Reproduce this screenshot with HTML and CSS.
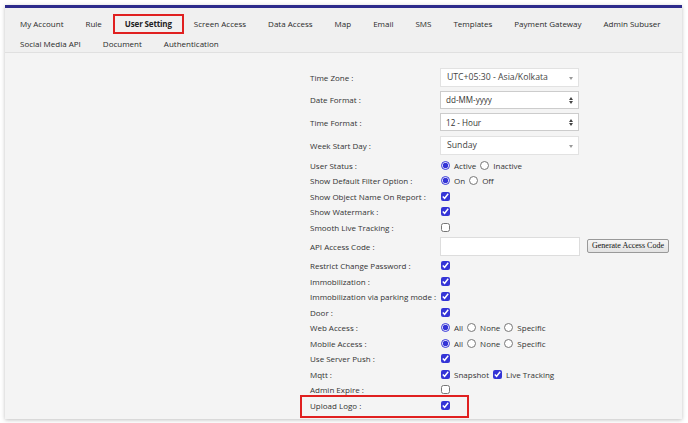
FILE: index.html
```html
<!DOCTYPE html>
<html>
<head>
<meta charset="utf-8">
<link rel="stylesheet" href="styles.css">
</head>
<body>
<div class="card">
  <nav class="tabs">
    <div class="tab-row">
      <span class="tab">My Account</span>
      <span class="tab">Rule</span>
      <span class="tab active">User Setting</span>
      <span class="tab">Screen Access</span>
      <span class="tab">Data Access</span>
      <span class="tab">Map</span>
      <span class="tab">Email</span>
      <span class="tab">SMS</span>
      <span class="tab">Templates</span>
      <span class="tab">Payment Gateway</span>
      <span class="tab">Admin Subuser</span>
    </div>
    <div class="tab-row">
      <span class="tab">Social Media API</span>
      <span class="tab">Document</span>
      <span class="tab">Authentication</span>
    </div>
  </nav>
  <div class="content">
    <div class="form">
      <div class="row sel-row"><label class="lbl">Time Zone :</label><div class="val"><div class="s2">UTC+05:30 - Asia/Kolkata<span class="caret"></span></div></div></div>
      <div class="row sel-row"><label class="lbl">Date Format :</label><div class="val"><div class="nsel">dd-MM-yyyy<span class="updown"><i class="up"></i><i class="dn"></i></span></div></div></div>
      <div class="row sel-row"><label class="lbl">Time Format :</label><div class="val"><div class="nsel">12 - Hour<span class="updown"><i class="up"></i><i class="dn"></i></span></div></div></div>
      <div class="row sel-row"><label class="lbl">Week Start Day :</label><div class="val"><div class="s2">Sunday<span class="caret"></span></div></div></div>
      <div class="row first-small"><label class="lbl">User Status :</label><div class="val"><input type="radio" name="us" checked><span class="opt">Active</span><input type="radio" name="us"><span class="opt">Inactive</span></div></div>
      <div class="row"><label class="lbl">Show Default Filter Option :</label><div class="val"><input type="radio" name="df" checked><span class="opt">On</span><input type="radio" name="df"><span class="opt">Off</span></div></div>
      <div class="row"><label class="lbl">Show Object Name On Report :</label><div class="val"><input type="checkbox" checked></div></div>
      <div class="row"><label class="lbl">Show Watermark :</label><div class="val"><input type="checkbox" checked></div></div>
      <div class="row"><label class="lbl">Smooth Live Tracking :</label><div class="val"><input type="checkbox"></div></div>
      <div class="row api-row"><label class="lbl">API Access Code :</label><div class="val"><div class="txt"></div><button class="gen">Generate Access Code</button></div></div>
      <div class="row"><label class="lbl">Restrict Change Password :</label><div class="val"><input type="checkbox" checked></div></div>
      <div class="row"><label class="lbl">Immobilization :</label><div class="val"><input type="checkbox" checked></div></div>
      <div class="row"><label class="lbl">Immobilization via parking mode :</label><div class="val"><input type="checkbox" checked></div></div>
      <div class="row"><label class="lbl">Door :</label><div class="val"><input type="checkbox" checked></div></div>
      <div class="row"><label class="lbl">Web Access :</label><div class="val"><input type="radio" name="wa" checked><span class="opt">All</span><input type="radio" name="wa"><span class="opt">None</span><input type="radio" name="wa"><span class="opt">Specific</span></div></div>
      <div class="row"><label class="lbl">Mobile Access :</label><div class="val"><input type="radio" name="ma" checked><span class="opt">All</span><input type="radio" name="ma"><span class="opt">None</span><input type="radio" name="ma"><span class="opt">Specific</span></div></div>
      <div class="row"><label class="lbl">Use Server Push :</label><div class="val"><input type="checkbox" checked></div></div>
      <div class="row"><label class="lbl">Mqtt :</label><div class="val"><input type="checkbox" checked><span class="opt">Snapshot</span><input type="checkbox" checked><span class="opt">Live Tracking</span></div></div>
      <div class="row"><label class="lbl">Admin Expire :</label><div class="val"><input type="checkbox"></div></div>
      <div class="row marked"><label class="lbl">Upload Logo :</label><div class="val"><input type="checkbox" checked></div></div>
    </div>
  </div>
</div>
</body>
</html>
```
FILE: styles.css
```css
* { box-sizing: border-box; }
html, body { margin: 0; padding: 0; background: #fff; }
body {
  font-family: "Open Sans", "Liberation Sans", sans-serif;
  font-size: 8px;
  color: #333;
  padding: 5px 6px 4px 5px;
}
.card {
  border-top: 3px solid #2e2b8c;
  background: #f4f4f4;
  box-shadow: 0 1px 4px rgba(0,0,0,0.25);
  height: 414px;
  overflow: hidden;
}
.tabs {
  background: #f0f0f0;
  border-bottom: 1px solid #e0e0e0;
  padding: 6px 0 0 4px;
  height: 45px;
}
.tab-row { display: flex; height: 20px; align-items: center; }
.tab {
  padding: 0 9px;
  line-height: 16px;
  white-space: nowrap;
  border: 2px solid transparent;
  color: #2a2a2a;
}
.tab.active {
  font-weight: 700;
  letter-spacing: -0.15px;
  color: #222;
  border-color: #e02020;
  padding: 0 10px;
  margin: 0 -1px 0 0;
}
.content { padding: 13px 0 0 305px; }
.form { display: flex; flex-direction: column; }
.row { display: flex; align-items: center; height: 15.5px; position: relative; }
.sel-row { height: 22.6px; }
.first-small { margin-top: 1px; }
.api-row { height: 23px; }
.lbl { width: 130px; flex: none; white-space: nowrap; }
.val { display: flex; align-items: center; }
.s2, .nsel {
  width: 139px;
  height: 19px;
  background: #fff;
  border: 1px solid #ddd;
  display: flex;
  align-items: center;
  padding-left: 6px;
  position: relative;
  color: #444;
}
.s2 { font-size: 8.7px; border-color: #e2e2e2; }
.nsel { border-color: #ccc; height: 18px; font-size: 8.1px; padding-left: 5px; color: #333; }
.caret {
  position: absolute;
  right: 5px; top: 8px;
  border-left: 2.5px solid transparent;
  border-right: 2.5px solid transparent;
  border-top: 3px solid #999;
}
.updown { position: absolute; right: 5px; top: 5px; display: flex; flex-direction: column; gap: 1px; }
.updown i { display: block; border-left: 2px solid transparent; border-right: 2px solid transparent; }
.updown .up { border-bottom: 3px solid #444; }
.updown .dn { border-top: 3px solid #444; }
input[type=checkbox], input[type=radio] {
  margin: 0 4px 0 1px;
  width: 9px;
  height: 9px;
  accent-color: #3434d6;
}
.opt { margin-right: 3px; }
.txt {
  width: 140px; height: 19px;
  background: #fff;
  border: 1px solid #ddd;
}
.gen {
  margin-left: 7px;
  font-family: "Liberation Serif", "Times New Roman", serif;
  font-size: 8px;
  color: #111;
  height: 14px;
  padding: 0 4px;
  border: 1px solid #999;
  border-radius: 2px;
  background: linear-gradient(#f6f6f6, #e2e2e2);
  line-height: 12px;
}
.marked::before {
  content: "";
  position: absolute;
  left: -10px; top: -2px;
  width: 165px; height: 19px;
  border: 2px solid #e02020;
}
```
